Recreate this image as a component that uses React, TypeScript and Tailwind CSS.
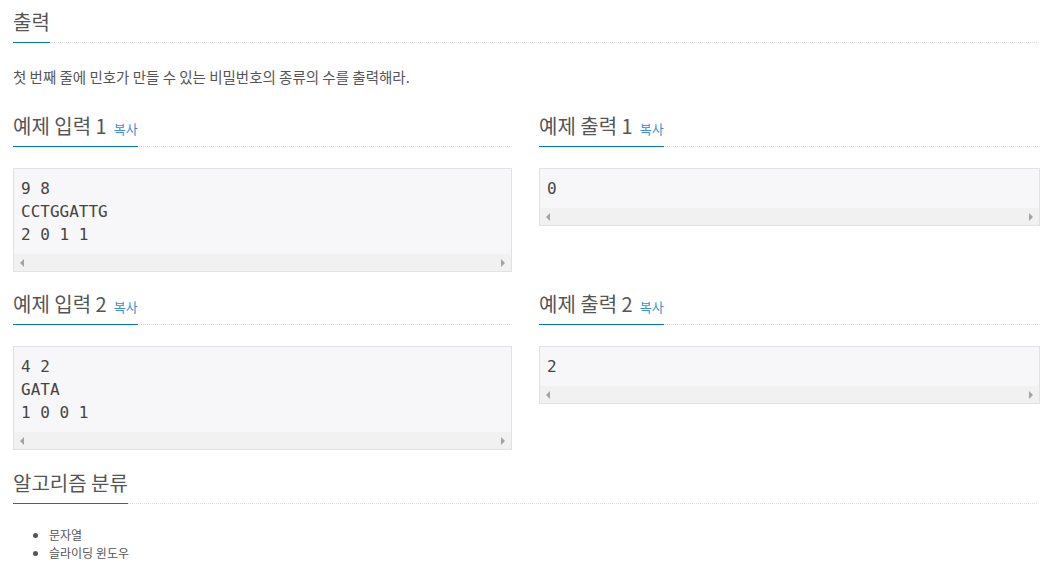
const KR = { fontFamily: '"Noto Sans CJK KR", "Noto Sans", sans-serif' }

function Headline({ title, copy }: { title: string; copy?: boolean }) {
  return (
    <div className="border-b border-dotted border-[#dcdcdc]">
      <h2 className="-mb-px inline-block border-b border-[#0076c0] pb-[10px] text-[20px] leading-[20px] text-[#555]">
        {title}
        {copy && <span className="ml-[7px] text-[13px] leading-none text-[#3b8fd5]">복사</span>}
      </h2>
    </div>
  )
}

function Sample({ lines }: { lines: string[] }) {
  return (
    <div className="border border-[#e1e1e8] bg-[#f7f7f9]">
      <pre
        className="px-[7px] pt-[7.5px] pb-[8.5px] text-[16px] leading-[23px] text-[#444]"
        style={{ fontFamily: '"DejaVu Sans Mono", monospace' }}
      >
        {lines.join('\n')}
      </pre>
      {/* fake horizontal scrollbar */}
      <div className="flex h-[17px] items-center justify-between bg-[#f1f1f1] px-[6px]">
        <span className="h-0 w-0 border-y-[4px] border-r-[4px] border-y-transparent border-r-[#a3a3a3]" />
        <span className="h-0 w-0 border-y-[4px] border-l-[4px] border-y-transparent border-l-[#a3a3a3]" />
      </div>
    </div>
  )
}

function Example({ n, input, output }: { n: number; input: string[]; output: string[] }) {
  return (
    <div className="grid grid-cols-[499px_501px] gap-x-[27px]">
      <div>
        <Headline title={`예제 입력 ${n}`} copy />
        <div className="mt-[21px]">
          <Sample lines={input} />
        </div>
      </div>
      <div>
        <Headline title={`예제 출력 ${n}`} copy />
        <div className="mt-[21px]">
          <Sample lines={output} />
        </div>
      </div>
    </div>
  )
}

export default function App() {
  return (
    <div className="min-h-[576px] bg-white px-[13px] pt-[11px]" style={KR}>
      <section>
        <Headline title="출력" />
        <p className="mt-[24px] text-[14.5px] leading-[20px] text-[#555]">
          첫 번째 줄에 민호가 만들 수 있는 비밀번호의 종류의 수를 출력해라.
        </p>
      </section>

      <div className="mt-[28px]">
        <Example n={1} input={['9 8', 'CCTGGATTG', '2 0 1 1']} output={['0']} />
      </div>
      <div className="mt-[21px]">
        <Example n={2} input={['4 2', 'GATA', '1 0 0 1']} output={['2']} />
      </div>

      <section className="mt-[22px]">
        <Headline title="알고리즘 분류" />
        <ul className="mt-[22px] list-disc pl-[36px] text-[12px] leading-[18px] text-[#555]">
          <li>문자열</li>
          <li>슬라이딩 윈도우</li>
        </ul>
      </section>
    </div>
  )
}
